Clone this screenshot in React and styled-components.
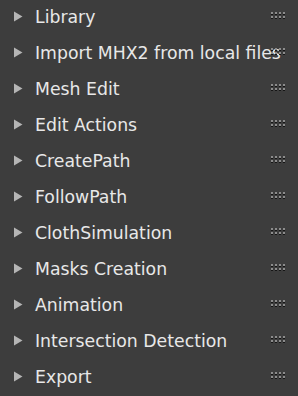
import React from 'react';
import styled, { createGlobalStyle } from 'styled-components';

const GlobalStyle = createGlobalStyle`
  html, body {
    margin: 0;
    padding: 0;
    background: #3d3d3d;
  }
  body {
    font-family: "DejaVu Sans", "Liberation Sans", sans-serif;
    overflow: hidden;
  }
`;

const Sidebar = styled.div`
  width: 298px;
  height: 396px;
  background: #3d3d3d;
  display: flex;
  flex-direction: column;
  overflow: hidden;
`;

const PanelHeader = styled.div`
  position: relative;
  height: 33px;
  margin-bottom: 3px;
  flex-shrink: 0;
  display: flex;
  align-items: center;
  padding-left: 14px;
  color: #e8e8e8;
  font-size: 17.3px;
  white-space: nowrap;
`;

const Arrow = styled.svg`
  flex-shrink: 0;
  margin-right: 12px;
`;

const Label = styled.span`
  line-height: 20px;
`;

const Grip = styled.svg`
  position: absolute;
  right: 13px;
  top: 12px;
`;

const ArrowIcon = () => (
  <Arrow width="9" height="11" viewBox="0 0 9 11">
    <polygon points="0,0.5 8.5,5.5 0,10.5" fill="#b5b5b5" />
  </Arrow>
);

const GripIcon = () => {
  const dots = [];
  for (let r = 0; r < 2; r++) {
    for (let c = 0; c < 4; c++) {
      dots.push(
        <g key={`${r}-${c}`}>
          <rect x={c * 4} y={r * 4 + 1} width="2" height="2" fill="#151515" />
          <rect x={c * 4} y={r * 4} width="2" height="2" fill="#8c8c8c" />
        </g>
      );
    }
  }
  return (
    <Grip width="14" height="8" viewBox="0 0 14 8">
      {dots}
    </Grip>
  );
};

const panels = [
  'Library',
  'Import MHX2 from local files',
  'Mesh Edit',
  'Edit Actions',
  'CreatePath',
  'FollowPath',
  'ClothSimulation',
  'Masks Creation',
  'Animation',
  'Intersection Detection',
  'Export',
];

export default function App() {
  return (
    <>
      <GlobalStyle />
      <Sidebar>
        {panels.map((name) => (
          <PanelHeader key={name}>
            <ArrowIcon />
            <Label>{name}</Label>
            <GripIcon />
          </PanelHeader>
        ))}
      </Sidebar>
    </>
  );
}
